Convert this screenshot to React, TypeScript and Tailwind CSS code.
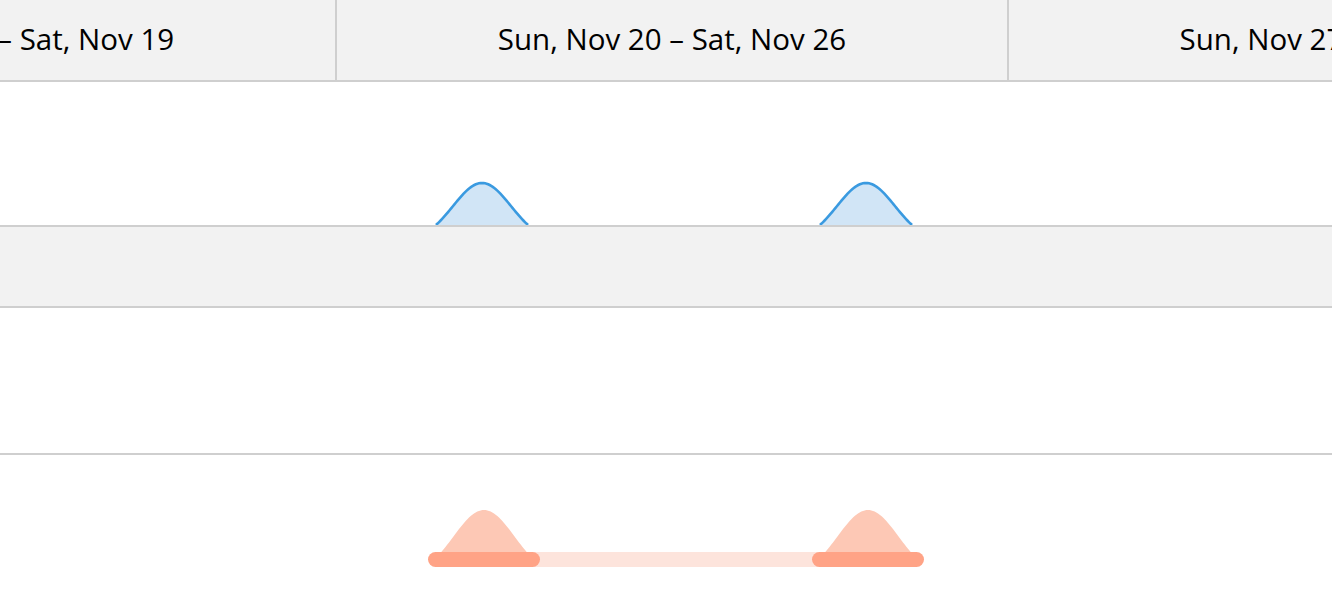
import React from "react";

function bumpPath(cx: number, baseY: number, height: number, half: number, sigma: number, closed: boolean) {
  const g0 = Math.exp(-(half * half) / (2 * sigma * sigma));
  const pts: string[] = [];
  for (let i = 0; i <= 60; i++) {
    const x = -half + (2 * half * i) / 60;
    const g = Math.exp(-(x * x) / (2 * sigma * sigma));
    const y = baseY - (height * (g - g0)) / (1 - g0);
    pts.push(`${(cx + x).toFixed(2)},${y.toFixed(2)}`);
  }
  let d = "M" + pts.join(" L");
  if (closed) d += " Z";
  return d;
}

const font = { fontFamily: '"Open Sans", "Noto Sans", sans-serif' };

export default function App() {
  const cols = ["Sun, Nov 13 – Sat, Nov 19", "Sun, Nov 20 – Sat, Nov 26", "Sun, Nov 27 – Sat, Dec 3"];
  return (
    <div className="w-[1332px] h-[598px] overflow-hidden bg-white" style={font}>
      <div className="h-[82px] bg-[#f2f2f2] border-b-2 border-[#cfcfcf] overflow-hidden">
        <div className="flex h-full ml-[-335px]">
          {cols.map((c, i) => (
            <div
              key={i}
              className="w-[672px] shrink-0 h-full flex items-center justify-center pb-[2px] border-r-2 border-[#cfcfcf] text-[29.5px] text-black whitespace-nowrap"
            >
              {c}
            </div>
          ))}
        </div>
      </div>
      <div className="h-[145px] border-b-2 border-[#cfcfcf]">
        <svg width="1332" height="143" viewBox="0 82 1332 143" className="block">
          {[482, 866].map((cx) => (
            <g key={cx}>
              <path d={bumpPath(cx, 225, 42, 46, 29, true)} fill="#d1e5f6" />
              <path d={bumpPath(cx, 225, 42, 46, 29, false)} fill="none" stroke="#3a9ae0" strokeWidth={2.6} />
            </g>
          ))}
        </svg>
      </div>
      <div className="h-[81px] bg-[#f2f2f2] border-b-2 border-[#cfcfcf]"></div>
      <div className="h-[147px] border-b-2 border-[#cfcfcf]"></div>
      <div className="h-[143px]">
        <svg width="1332" height="143" viewBox="0 455 1332 143" className="block">
          <rect x={530} y={552} width={290} height={15} fill="#fde4dc" />
          {[484, 868].map((cx) => (
            <path key={cx} d={bumpPath(cx, 560, 50, 50, 31, true)} fill="#fdc8b5" />
          ))}
          <rect x={428} y={552} width={112} height={15} rx={7.5} fill="#ffa386" />
          <rect x={812} y={552} width={112} height={15} rx={7.5} fill="#ffa386" />
        </svg>
      </div>
    </div>
  );
}
